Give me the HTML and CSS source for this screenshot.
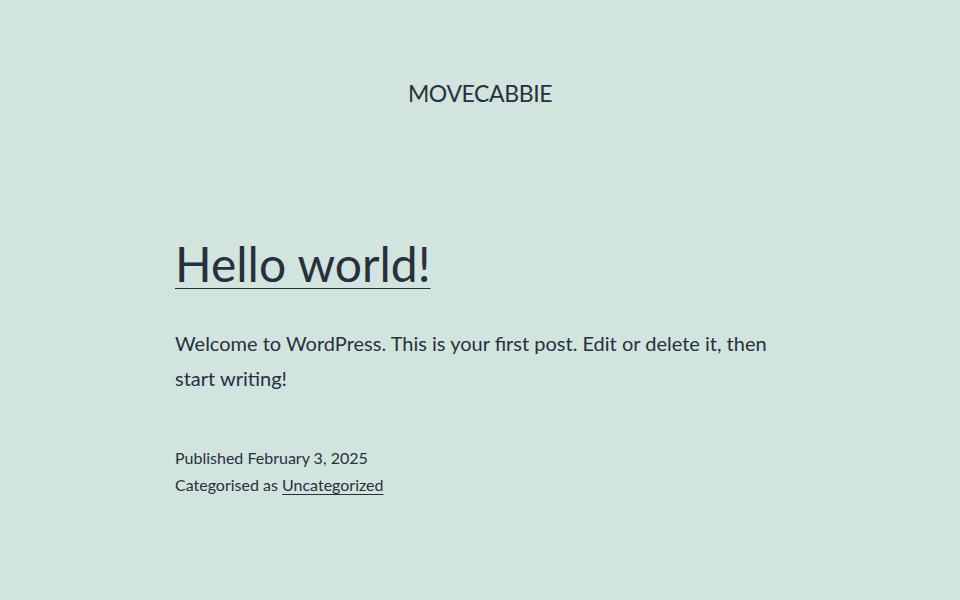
FILE: index.html
```html
<!DOCTYPE html>
<html lang="en">
<head>
<meta charset="utf-8">
<title>MOVECABBIE</title>
<link rel="stylesheet" href="styles.css">
</head>
<body>
<div class="site">
  <header class="site-header">
    <p class="site-title">MOVECABBIE</p>
  </header>
  <main class="site-main">
    <article class="post">
      <h1 class="entry-title"><a href="#">Hello world!</a></h1>
      <div class="entry-content">
        <p>Welcome to WordPress. This is your first post. Edit or delete it, then start writing!</p>
      </div>
      <footer class="entry-footer">
        <div class="posted-on">Published February 3, 2025</div>
        <div class="cat-links">Categorised as <a href="#">Uncategorized</a></div>
      </footer>
    </article>
  </main>
</div>
</body>
</html>
```
FILE: styles.css
```css
html, body {
  margin: 0;
  padding: 0;
}
body {
  background: #d1e4dd;
  color: #28303d;
  font-family: Lato, "Liberation Sans", sans-serif;
  height: 600px;
  overflow: hidden;
}
a {
  color: #28303d;
}
.site-header {
  padding-top: 77px;
  display: flex;
  justify-content: center;
}
.site-title {
  margin: 0;
  font-size: 23px;
  letter-spacing: -0.4px;
  line-height: 32px;
  font-weight: 400;
}
.site-main {
  width: 610px;
  margin: 0 auto;
  padding-top: 124px;
}
.entry-title {
  margin: 0;
  font-size: 48px;
  font-weight: 400;
  line-height: 62px;
}
.entry-title a {
  text-decoration: underline;
  text-decoration-thickness: 1px;
  text-underline-offset: 6px;
}
.entry-content p {
  margin: 31px 0 0;
  font-size: 20px;
  line-height: 34.5px;
}
.entry-footer {
  margin-top: 50px;
  font-size: 16px;
  line-height: 26.5px;
}
.entry-footer a {
  text-decoration-thickness: 1px;
  text-underline-offset: 3px;
}
```
